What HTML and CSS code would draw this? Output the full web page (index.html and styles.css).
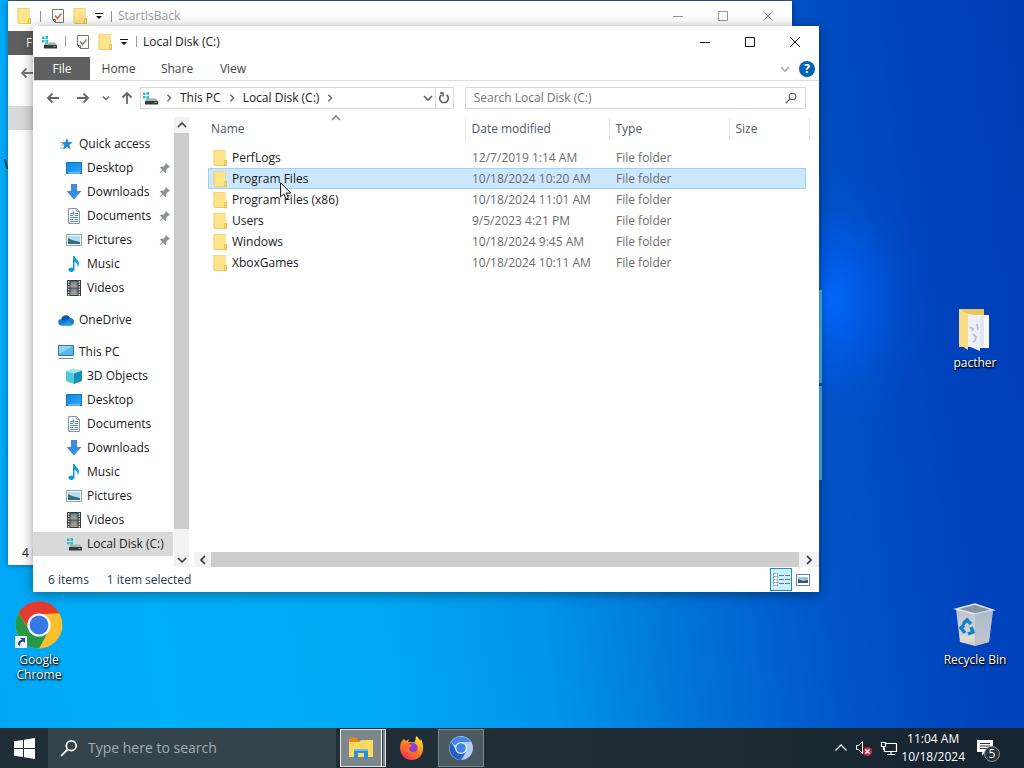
FILE: index.html
```html
<!DOCTYPE html>
<html lang="en">
<head>
<meta charset="utf-8">
<title>Local Disk (C:)</title>
<link rel="stylesheet" href="styles.css">
</head>
<body>
<svg class="defs" aria-hidden="true">
  <defs>
    <linearGradient id="blue" x1="0" y1="0" x2="1" y2="1"><stop offset="0" stop-color="#1583dc"/><stop offset="1" stop-color="#28a8fc"/></linearGradient>
    <linearGradient id="fire" x1="0.8" y1="0" x2="0.2" y2="1"><stop offset="0" stop-color="#ffe33c"/><stop offset="0.5" stop-color="#ff8420"/><stop offset="1" stop-color="#f5245c"/></linearGradient>
    <linearGradient id="bin" x1="0" y1="0" x2="0" y2="1"><stop offset="0" stop-color="#b4bfcb"/><stop offset="0.75" stop-color="#d3d7dd"/><stop offset="0.8" stop-color="#e6ddd0"/><stop offset="1" stop-color="#cfcac8"/></linearGradient>
  </defs>
  <symbol id="folder" viewBox="0 0 16 16"><path d="M1.500 0H13.500v10H15v6H3l-1.500-1z" fill="#efc95c"/><path d="M2.500 .5H13v14.500H2.500z" fill="#ffe48a"/><path d="M12.500 10.500h2v5h-2z" fill="#f7d975" stroke="#dfb74f" stroke-width=".6"/></symbol>
  <symbol id="drive" viewBox="0 0 16 16"><path d="M1 2.500h2.500V5H1zM4.500 2H7v3H4.500zM1 6h2.500v2.500H1zM4.500 6H7v3H4.500z" fill="#1fc0d3"/><path d="M4.500 8.500h9L16 11H3z" fill="#a8b0b4"/><path d="M3 11h13v3.500H3z" fill="#343b40"/><path d="M12.500 12h2v1h-2z" fill="#65d58a"/></symbol>
  <symbol id="check" viewBox="0 0 16 16"><path d="M2.500 1.500h11v13h-8l-3-3z" fill="#fff" stroke="#777"/><path d="M2.500 11.500h3v3" fill="none" stroke="#777"/><path d="M5 7.500l2.500 3 4-5" fill="none" stroke="currentColor" stroke-width="1.500"/></symbol>
  <symbol id="more" viewBox="0 0 8 8"><path d="M0 1h8v1H0zM1 4h6L4 7z" fill="#111"/></symbol>
  <symbol id="back" viewBox="0 0 14 14"><path d="M13 7H2M6.500 2.500L2 7l4.500 4.500" fill="none" stroke="currentColor" stroke-width="1.800"/></symbol>
  <symbol id="chev" viewBox="0 0 10 10"><path d="M1 3l4 4 4-4" fill="none" stroke="currentColor" stroke-width="1.700"/></symbol>
  <symbol id="min" viewBox="0 0 12 12"><path d="M1 6.500h10" stroke="currentColor"/></symbol>
  <symbol id="max" viewBox="0 0 12 12"><path d="M1.500 1.500h9v9h-9z" fill="none" stroke="currentColor"/></symbol>
  <symbol id="close" viewBox="0 0 12 12"><path d="M1 1l10 10M11 1L1 11" stroke="currentColor"/></symbol>
  <symbol id="lens" viewBox="0 0 16 16"><circle cx="10" cy="6" r="4.400" fill="none" stroke="currentColor" stroke-width="1.500"/><path d="M6.800 9.200L1 15" stroke="currentColor" stroke-width="1.600"/></symbol>
  <symbol id="star" viewBox="0 0 16 16"><path d="M9 2l1.500 4 4.300.2-3.400 2.700 1.200 4.500L9 11l-3.800 2.500 1.200-4.400-3.300-2.700 4.300-.3z" fill="#2488d8"/><path d="M2 6.500h3M3 9h3M2 12h4" stroke="#72b9ea"/></symbol>
  <symbol id="desktop" viewBox="0 0 16 16"><path d="M0 2h16v12H0z" fill="#1471b8"/><path d="M.8 2.800h14.400v10H.8z" fill="url(#blue)"/><path d="M2 13h12" stroke="#b9dcf7"/></symbol>
  <symbol id="down" viewBox="0 0 16 16"><path d="M5 0h6v7h4.500L8 15.500.5 7H5z" fill="#3b8edb"/></symbol>
  <symbol id="doc" viewBox="0 0 16 16"><path d="M2.500.5h8l3 3v12h-11z" fill="#fff" stroke="#8b98a1"/><path d="M10.500.5v3h3" fill="none" stroke="#8b98a1"/><path d="M4 5.500h3M4 7.500h3M8.500 5.500H12M8.500 7.500H12M4 9.500h8M4 11.500h3M8.500 11.500H12M4 13.500h8M7.500 3.500v3" stroke="#4a90c9"/></symbol>
  <symbol id="pic" viewBox="0 0 16 16"><path d="M.5 2.500h15v11H.5z" fill="#fff" stroke="#8fa1ad"/><path d="M2 4h12v8H2z" fill="#b8dcef"/><path d="M2 6l4 2 8 2v2H2z" fill="#386b82"/></symbol>
  <symbol id="music" viewBox="0 0 16 16"><path d="M7 0h1.500c.5 3 5 4 4.500 8-.2 1.500-.8 2.500-1.500 3 .6-3-1-4.500-3-5v7.500c0 1.400-1.300 2.500-3 2.500s-3-1-3-2.300C2.500 12 5 11 7 11.700z" fill="#1898dc"/></symbol>
  <symbol id="video" viewBox="0 0 16 16"><path d="M1 0h14v16H1z" fill="#363a40"/><path d="M4.500 1.500h7v6h-7zM4.500 8.500h7V15h-7z" fill="#6e8ba3"/><path d="M4.500 5l3-2 4 3v1.500h-7zM4.500 12l4-2 3 3v2h-7z" fill="#a39a80"/><path d="M2.700 1v15M13.300 1v15" stroke="#f5f5f5" stroke-width="1.400" stroke-dasharray="1.400 1.200"/></symbol>
  <symbol id="cloud" viewBox="0 0 16 16"><path d="M3.500 7A4.500 4.500 0 0 1 12 6c2.500 0 4 1.700 4 3.800S14.500 13.500 12.500 13.500h-9A3.200 3.200 0 0 1 3.500 7z" fill="#167bd0"/><path d="M3.500 7A4.500 4.500 0 0 1 12 6L6 9z" fill="#0a59a5"/><path d="M2 13l9-4 4.500 3a3.500 3.500 0 0 1-3 1.500h-9z" fill="#2498e8"/></symbol>
  <symbol id="pc" viewBox="0 0 16 16"><path d="M.5 1.500h15v10H.5z" fill="#55b8f3" stroke="#3b7499"/><path d="M1 2h14L1 10z" fill="#91d6fa"/><path d="M1 14.500h14" stroke="#78868f"/></symbol>
  <symbol id="cube" viewBox="0 0 16 16"><path d="M0 3l7-2.500 9 2-7 3z" fill="#9be6ef"/><path d="M0 3l8 2.500V16l-8-3z" fill="#4fc9dc"/><path d="M8 5.500l8-3V13l-8 3z" fill="#168fb9"/></symbol>
  <symbol id="pin" viewBox="0 0 12 12"><path d="M7 1l4 4-1 .8-.8-.3-2 2.200.1 2.500-1 1-2.500-2.600L1 11.200.5 11l2.600-3L1 5.500l1-1 2.500.2 2-2-.3-.8z" fill="#8d9499"/></symbol>
</svg>

<main class="desktop">
  <span class="hidden-label"></span>
  <span class="logo-edge"></span>

  <div class="shortcut chrome">
    <svg viewBox="0 0 48 48"><circle cx="24" cy="24" r="23.500" fill="#f9bf2d"/><path d="M3.600 12.200A23.500 23.500 0 0 1 44.400 12.200L24 13.300 14.500 29z" fill="#e33b2e"/><path d="M3.600 12.200A23.500 23.500 0 0 0 24.200 47.500L33.500 29.500 24 34.500 14.500 29.500z" fill="#279847"/><circle cx="24" cy="24" r="11.600" fill="#fff"/><circle cx="24" cy="24" r="9.400" fill="#3777e6"/><path d="M0 35h12v12H0z" fill="#f7f9ff"/><path d="M3 44c0-4 2-5 4-5l-2-2h5v5L8 40.500C6 41 5 42 5 45z" fill="#294b91"/></svg>
    <span>Google<br>Chrome</span>
  </div>
  <div class="shortcut pacther">
    <svg viewBox="0 0 48 48"><path d="M8 5h25v38H8z" fill="#e9c45c"/><path d="M25 11h13v33H25z" fill="#fbfaf4"/><path d="M29 12l4-1v33l-4-1z" fill="#e3e5ef"/><path d="M8 5l9 5v36l-9-6z" fill="#f9dc87"/><path d="M17 10l12 2v35l-12-5z" fill="#eef0f8"/><path d="M19 23l3 2-1 2M22 30l3 3-1 4-2 1M26 20l1 6" stroke="#b5bdd2" stroke-width="1.800" fill="none"/></svg>
    <span>pacther</span>
  </div>
  <div class="shortcut recycle">
    <svg viewBox="0 0 48 48"><path d="M5 8L24 3l18 6-4 32-14 4-15-4z" fill="url(#bin)"/><path d="M5 8l19-5 18 6-18 4z" fill="#8795a3" stroke="#dfe6ed" stroke-width="1.500"/><path d="M24 13l18-4-4 32-14 4z" fill="#a9b6c6" opacity=".6"/><path d="M12 23l4-4 4 4M20 26l2 5-5 2M14 32l-4-5 3-3" fill="none" stroke="#1683c7" stroke-width="3.500"/></svg>
    <span>Recycle Bin</span>
  </div>

  <section class="window rear" aria-label="StartIsBack">
    <header class="titlebar">
      <svg class="i16"><use href="#folder"/></svg><i class="sep"></i>
      <svg class="i16 orange"><use href="#check"/></svg><svg class="i16"><use href="#folder"/></svg><svg class="i8"><use href="#more"/></svg><i class="sep"></i>
      <span class="title">StartIsBack</span>
      <div class="caption"><button aria-label="Minimize"><svg><use href="#min"/></svg></button><button aria-label="Maximize"><svg><use href="#max"/></svg></button><button aria-label="Close"><svg><use href="#close"/></svg></button></div>
    </header>
    <div class="rear-tab">F</div>
    <div class="rear-nav"><svg class="i14"><use href="#back"/></svg></div>
    <div class="rear-head"></div>
    <div class="rear-body"></div>
    <footer class="rear-status">4 items</footer>
  </section>

  <section class="window front" aria-label="Local Disk (C:)">
    <header class="titlebar">
      <svg class="i16"><use href="#drive"/></svg><i class="sep"></i>
      <svg class="i16 tan"><use href="#check"/></svg><svg class="i16"><use href="#folder"/></svg><svg class="i8"><use href="#more"/></svg><i class="sep"></i>
      <span class="title">Local Disk (C:)</span>
      <div class="caption"><button aria-label="Minimize"><svg><use href="#min"/></svg></button><button aria-label="Maximize"><svg><use href="#max"/></svg></button><button aria-label="Close"><svg><use href="#close"/></svg></button></div>
    </header>
    <nav class="ribbon">
      <button class="file">File</button><button>Home</button><button>Share</button><button>View</button>
      <span class="help"><button aria-label="Expand ribbon"><svg class="i10"><use href="#chev"/></svg></button><button class="question" aria-label="Help">?</button></span>
    </nav>
    <div class="address">
      <button class="b-back" aria-label="Back"><svg class="i14"><use href="#back"/></svg></button>
      <button class="b-fwd" aria-label="Forward"><svg class="i14 flip"><use href="#back"/></svg></button>
      <button class="b-recent" aria-label="Recent"><svg class="i8"><use href="#chev"/></svg></button>
      <button class="b-up" aria-label="Up"><svg class="i14 up"><use href="#back"/></svg></button>
      <div class="path">
        <svg class="i16"><use href="#drive"/></svg><svg class="i8 right"><use href="#chev"/></svg>
        <button>This PC</button><svg class="i8 right"><use href="#chev"/></svg>
        <button>Local Disk (C:)</button><svg class="i8 right"><use href="#chev"/></svg>
        <button class="drop" aria-label="History"><svg class="i10"><use href="#chev"/></svg></button>
        <button class="refresh" aria-label="Refresh"><svg viewBox="0 0 12 12" class="i12"><path d="M8.500 2.800A4.300 4.300 0 1 1 3.500 2.800M2 1h3v3.500" fill="none" stroke="#555" stroke-width="1.500"/></svg></button>
      </div>
      <label class="search"><input type="text" aria-label="Search Local Disk (C:)" placeholder="Search Local Disk (C:)"><svg class="i12"><use href="#lens"/></svg></label>
    </div>
    <div class="content">
      <nav class="tree">
        <ul>
          <li class="root"><svg class="i16"><use href="#star"/></svg>Quick access</li>
          <li><svg class="i16"><use href="#desktop"/></svg>Desktop<svg class="pin"><use href="#pin"/></svg></li>
          <li><svg class="i16"><use href="#down"/></svg>Downloads<svg class="pin"><use href="#pin"/></svg></li>
          <li><svg class="i16"><use href="#doc"/></svg>Documents<svg class="pin"><use href="#pin"/></svg></li>
          <li><svg class="i16"><use href="#pic"/></svg>Pictures<svg class="pin"><use href="#pin"/></svg></li>
          <li><svg class="i16"><use href="#music"/></svg>Music</li>
          <li><svg class="i16"><use href="#video"/></svg>Videos</li>
        </ul>
        <ul><li class="root"><svg class="i16"><use href="#cloud"/></svg>OneDrive</li></ul>
        <ul>
          <li class="root"><svg class="i16"><use href="#pc"/></svg>This PC</li>
          <li><svg class="i16"><use href="#cube"/></svg>3D Objects</li>
          <li><svg class="i16"><use href="#desktop"/></svg>Desktop</li>
          <li><svg class="i16"><use href="#doc"/></svg>Documents</li>
          <li><svg class="i16"><use href="#down"/></svg>Downloads</li>
          <li><svg class="i16"><use href="#music"/></svg>Music</li>
          <li><svg class="i16"><use href="#pic"/></svg>Pictures</li>
          <li><svg class="i16"><use href="#video"/></svg>Videos</li>
          <li class="current"><svg class="i16"><use href="#drive"/></svg>Local Disk (C:)</li>
        </ul>
      </nav>
      <div class="vscroll"><button aria-label="Scroll up"><svg class="i10 turn"><use href="#chev"/></svg></button><div class="thumb"></div><button class="end" aria-label="Scroll down"><svg class="i10"><use href="#chev"/></svg></button></div>
      <div class="files">
        <table>
          <colgroup><col><col class="c-date"><col class="c-type"><col class="c-size"></colgroup>
          <thead><tr><th>Name<svg class="sort turn"><use href="#chev"/></svg></th><th>Date modified</th><th>Type</th><th>Size</th></tr></thead>
          <tbody>
            <tr><td><svg class="i16"><use href="#folder"/></svg>PerfLogs</td><td>12/7/2019 1:14 AM</td><td>File folder</td><td></td></tr>
            <tr class="selected"><td><svg class="i16"><use href="#folder"/></svg>Program Files</td><td>10/18/2024 10:20 AM</td><td>File folder</td><td></td></tr>
            <tr><td><svg class="i16"><use href="#folder"/></svg>Program Files (x86)</td><td>10/18/2024 11:01 AM</td><td>File folder</td><td></td></tr>
            <tr><td><svg class="i16"><use href="#folder"/></svg>Users</td><td>9/5/2023 4:21 PM</td><td>File folder</td><td></td></tr>
            <tr><td><svg class="i16"><use href="#folder"/></svg>Windows</td><td>10/18/2024 9:45 AM</td><td>File folder</td><td></td></tr>
            <tr><td><svg class="i16"><use href="#folder"/></svg>XboxGames</td><td>10/18/2024 10:11 AM</td><td>File folder</td><td></td></tr>
          </tbody>
        </table>
        <div class="hscroll"><button aria-label="Scroll left"><svg class="i10 left"><use href="#chev"/></svg></button><div class="thumb"></div><button aria-label="Scroll right"><svg class="i10 right"><use href="#chev"/></svg></button></div>
      </div>
    </div>
    <footer class="status"><span>6 items</span><span>1 item selected</span>
      <div class="views"><button class="on" aria-label="Details"><svg viewBox="0 0 20 20" class="i20"><path d="M2.500 3.500h4v12h-4zM2.500 6.500h4M2.500 9.500h4M2.500 12.500h4" fill="#fff" stroke="#7391a0" stroke-dasharray="2 1"/><path d="M8 5.500h5M14 5.500h5M8 9.500h5M14 9.500h5M8 13.500h5M14 13.500h5" stroke="#587f94"/></svg></button><button aria-label="Large icons"><svg viewBox="0 0 14 12" class="i14"><path d="M.5.500h13v11H.5z" fill="#fff" stroke="#6d80aa"/><path d="M2 3h10v6H2z" fill="#9fc4e4"/><path d="M2 5l5 2 5-1v3H2z" fill="#35556c"/></svg></button></div>
    </footer>
  </section>
  <svg class="cursor" viewBox="0 0 12 18"><path d="M.6.800v14l3.300-3 2.200 5.300 2.300-1-2.200-5h4.600z" fill="#fff" stroke="#111"/></svg>
</main>

<footer class="taskbar">
  <button class="start" aria-label="Start"><svg viewBox="0 0 20 20"><path d="M0 3l8.500-1.200v7.700H0zM9.500 1.700L20 0v9.500H9.500zM0 10.500h8.500v7.700L0 17zM9.500 10.500H20V20L9.500 18.400z" fill="#fff"/></svg></button>
  <label class="tasksearch"><svg class="i18"><use href="#lens"/></svg><input type="text" aria-label="Type here to search" placeholder="Type here to search"></label>
  <button class="app explorer" aria-label="File Explorer"><svg viewBox="0 0 24 24"><path d="M0 3c0-2 8-2 9 0v3H0z" fill="#e08b24"/><path d="M0 6h10l2-2h12v17H0z" fill="#ffd95e"/><path d="M5 13h14v10h-4v-6H9v6H5z" fill="#2d91d8"/><path d="M5 13h14v2H5z" fill="#67bbed"/></svg></button>
  <button class="app" aria-label="Firefox"><svg viewBox="0 0 24 24"><path d="M1 6l3-3 2 2 3-2-1 3 7 0 1-6c3 2 4 4 4 5l1-2c5 10 1 21-9 21C2 24-2 14 1 6z" fill="url(#fire)"/><circle cx="12" cy="12" r="5.500" fill="#8b3fd2"/><path d="M3 8c3-2 6 0 9 1-1 2-3 2-3 4 1 4 7 4 9 0-1 7-13 8-15-5z" fill="#ff6a2b"/></svg></button>
  <button class="app chromium" aria-label="Chromium"><svg viewBox="0 0 24 24"><circle cx="12" cy="12" r="12" fill="#b1cdf8"/><path d="M2 6a12 12 0 0 1 20 0H12v8z" fill="#4586e9"/><path d="M2 6a12 12 0 0 0 10 18l5-8-8 1z" fill="#2460c6"/><circle cx="12" cy="12" r="6" fill="#eef4ff"/><circle cx="12" cy="12" r="4.800" fill="#4285eb"/></svg></button>
  <div class="tray">
    <svg class="i14 turn" viewBox="0 0 14 14"><path d="M1.500 4.500L7 10l5.500-5.500" fill="none" stroke="#fff" stroke-width="1.300"/></svg>
    <svg class="i18" viewBox="0 0 18 18"><path d="M1.500 6.500h2l4-4v12l-4-4h-2z" fill="none" stroke="#fff"/><circle cx="12.500" cy="12.500" r="4.500" fill="#c92a46"/><path d="M10.500 10.500l4 4M14.500 10.500l-4 4" stroke="#fff" stroke-width="1.400"/></svg>
    <svg class="i18" viewBox="0 0 18 18"><path d="M5.500 4.500h11v8h-12v-4M11 12.500v3M7 15.500h8M1.500 3.500h4v4h-4zM3.500 7.500v3h1" fill="none" stroke="#fff" stroke-width="1.200"/></svg>
    <time>11:04 AM<br>10/18/2024</time>
    <button class="notify" aria-label="Notifications"><svg viewBox="0 0 18 18" class="i18"><path d="M1 1h16v12H9l-3 4v-4H1z" fill="#fff"/><path d="M4 4.500h10M4 7h10M4 9.500h7" stroke="#27333c"/></svg><span class="badge">5</span></button>
  </div>
</footer>
</body>
</html>
```
FILE: styles.css
```css
* { box-sizing: border-box; }
html, body { height: 100%; }
body { margin: 0; display: flex; flex-direction: column; overflow: hidden; font: 12px/16px "Open Sans", "Noto Sans", sans-serif; color: #1a1a1a; }
button, input { font: inherit; color: inherit; background: none; border: 0; padding: 0; margin: 0; }
button { display: flex; align-items: center; justify-content: center; }
svg { flex: none; display: block; }
.defs { position: absolute; width: 0; height: 0; }
.i8 { width: 8px; height: 8px; }
.i10 { width: 10px; height: 10px; }
.i12 { width: 12px; height: 12px; }
.i14 { width: 14px; height: 14px; }
.i16 { width: 16px; height: 16px; }
.i18 { width: 18px; height: 18px; }
.i20 { width: 20px; height: 20px; }
.flip, .turn { transform: rotate(180deg); }
.up, .left { transform: rotate(90deg); }
.right { transform: rotate(-90deg); }

.desktop {
  position: relative; flex: 1; min-height: 0; overflow: hidden;
  background:
    radial-gradient(ellipse 100px 130px at 830px 300px, rgba(0, 105, 255, 0.9), rgba(0, 100, 255, 0.45) 40%, rgba(0, 95, 240, 0.12) 75%, rgba(0, 90, 230, 0) 100%),
    linear-gradient(83deg, #00a6f6 0%, #00b0f8 15%, #00a9f3 34%, #0094ea 50%, #0070d6 64%, #0055c8 76%, #0044be 88%, #003cb4 100%);
}
.logo-edge { position: absolute; left: 800px; top: 290px; width: 22px; height: 190px; background: linear-gradient(#45b8e8 0 93px, #075a9a 93px 96px, #45b8e8 96px); }
.hidden-label { position: absolute; left: 5px; top: 159px; width: 6px; height: 10px; border-left: 2px solid #0b456f; transform: skewX(14deg); }

.shortcut { position: absolute; width: 76px; display: flex; flex-direction: column; align-items: center; gap: 3px; color: #fff; line-height: 15px; text-align: center; text-shadow: 1px 1px 2px #000, 0 1px 2px #000; }
.shortcut svg { width: 48px; height: 48px; }
.chrome { left: 1px; top: 601px; }
.pacther { right: 11px; top: 304px; }
.recycle { right: 11px; top: 601px; }

.window { position: absolute; display: flex; flex-direction: column; background: #fff; }
.front { left: 33px; right: 205px; top: 26px; bottom: 136px; box-shadow: 0 2px 12px rgba(0, 0, 0, 0.4); }
.rear { left: 8px; right: 232px; top: 1px; bottom: 163px; box-shadow: 0 0 6px rgba(0, 0, 0, 0.4), 0 -1px 0 #345b88; }
.titlebar { flex: none; display: flex; align-items: center; height: 31px; padding-left: 8px; gap: 8px; }
.rear .titlebar { height: 30px; }
.sep { width: 1px; height: 11px; background: #999; margin: 0 1px 0 0; }
.titlebar .i16 + .i16 { margin-left: -2px; }
.titlebar .i8 { margin-left: -1px; }
.titlebar .sep + .title { margin-left: -3px; }
.orange { color: #df6736; }
.tan { color: #8c7c70; }
.rear .title { color: #999; }
.title { flex: 1; }
.caption { display: flex; padding-right: 2px; }
.caption button { width: 45px; height: 30px; color: #111; }
.rear .caption button { color: #999; }
.caption svg { width: 12px; height: 12px; }
.rear-tab { height: 24px; padding: 4px 18px; color: #fff; background: #5e5e5e; }
.rear-nav { height: 51px; padding: 11px 12px; color: #777; }
.rear-head { height: 24px; background: #d9d9d9; }
.rear-body { flex: 1; }
.rear-status { padding: 4px 14px; }

.ribbon { flex: none; display: flex; height: 24px; padding-left: 1px; border-bottom: 1px solid #dedede; color: #444; }
.ribbon button { width: 57px; }
.ribbon .file { background: #606060; color: #fff; width: 56px; }
.ribbon button:nth-child(3) { width: 60px; }
.ribbon button:nth-child(4) { width: 52px; }
.ribbon .help { margin-left: auto; display: flex; align-items: center; gap: 6px; padding-right: 4px; color: #aaa; }
.ribbon .help button { width: 16px; height: 16px; }
.ribbon .help .question { border-radius: 50%; background: #0063b8; color: #fff; font-weight: 700; }

.address { flex: none; display: flex; align-items: center; height: 34px; padding: 0 13px; color: #666; }
.b-back { width: 14px; }
.b-fwd { width: 14px; margin-left: 16px; }
.b-recent { width: 8px; margin-left: 12px; }
.b-up { width: 14px; margin-left: 10px; }
.path { flex: 49; display: flex; align-items: center; height: 22px; margin-left: 6px; gap: 7px; border: 1px solid #d9d9d9; padding-left: 1px; color: #666; }
.path button { color: #1a1a1a; white-space: nowrap; }
.path .drop { margin-left: auto; color: #666; }
.path .refresh { width: 18px; height: 20px; border-left: 1px solid #d9d9d9; margin-left: -5px; }
.search { flex: 51; display: flex; align-items: center; height: 22px; margin-left: 11px; border: 1px solid #d9d9d9; padding: 0 8px; color: #555; }
input { flex: 1; min-width: 0; outline: 0; }
input::placeholder { color: #737373; opacity: 1; }

.content { flex: 1; min-height: 0; display: flex; padding-top: 2px; }
.tree { width: 141px; flex: none; padding: 15px 1px 0 0; overflow: hidden; }
.tree ul { list-style: none; margin: 0 0 8px; padding: 0; }
.tree li { display: flex; align-items: center; height: 24px; padding-left: 33px; gap: 5px; white-space: nowrap; }
.tree .root { padding-left: 25px; }
.tree .current { background: #d9d9d9; }
.pin { width: 12px; height: 12px; margin-left: auto; margin-right: 2px; }
.vscroll { width: 15px; flex: none; display: flex; flex-direction: column; background: #f2f2f2; color: #444; }
.vscroll button { height: 16px; }
.thumb { flex: 1; background: #cdcdcd; }
.vscroll .end { height: 38px; align-items: flex-end; padding-bottom: 2px; }
.files { flex: 1; min-width: 0; display: flex; flex-direction: column; padding-left: 5px; }
table { border-collapse: collapse; table-layout: fixed; width: calc(100% - 27px); margin: 1px 0 0 14px; }
.c-date { width: 144px; }
.c-type { width: 120px; }
.c-size { width: 77px; }
th { position: relative; height: 22px; padding: 0 6px; text-align: left; font-weight: 400; color: #4c5b69; border-left: 1px solid #e5e5e5; }
th:first-child { border-left: 0; padding-left: 3px; }
.sort { position: absolute; left: 48%; top: -5px; width: 10px; height: 10px; color: #888; }
th:last-child::after { content: ""; position: absolute; right: -4px; top: 0; bottom: 0; border-right: 1px solid #e5e5e5; }
td { height: 21px; padding: 0 7px; color: #6d6d6d; white-space: nowrap; }
td:first-child { padding-left: 4px; color: #1a1a1a; }
td svg { display: inline-block; vertical-align: top; margin-right: 4px; }
tbody::before { content: ""; display: block; height: 7px; }
.selected { background: #cce8ff; outline: 1px solid #99d1ff; outline-offset: -1px; }
.hscroll { display: flex; height: 15px; margin-top: auto; color: #333; background: #f2f2f2; }
.hscroll button { width: 17px; }
.hscroll button:last-child { width: 20px; }
.status { flex: none; display: flex; align-items: center; height: 25px; padding: 0 5px 0 15px; gap: 18px; color: #1e395b; }
.views { display: flex; margin-left: auto; }
.views button { width: 22px; height: 23px; }
.views .on { border: 1px solid #268dad; background: #cceffc; }
.cursor { position: absolute; left: 280px; top: 182px; width: 12px; height: 18px; }

.taskbar { flex: none; display: flex; height: 40px; color: #fff; background: linear-gradient(90deg, #1f2e35, #202d35 55%, #162430); }
.start { width: 48px; }
.start svg { width: 21px; height: 21px; }
.tasksearch { display: flex; align-items: center; width: 288px; gap: 10px; padding-left: 12px; background: #35444b; font-size: 14px; line-height: 20px; margin-right: 4px; }
.tasksearch input::placeholder { color: #a4adb1; }
.app { width: 46px; margin: 1px 3px 1px 0; }
.app svg { width: 24px; height: 24px; }
.explorer { padding-right: 5px; background: linear-gradient(90deg, #7d878b 40px, #fff 40px 41px, #26333a 41px 42px, #7d878b 42px); border: 1px solid #e4e7e8; }
.chromium { background: #4b5960; border: 1px solid #7b878d; }
.tray { margin-left: auto; display: flex; align-items: center; gap: 7px; padding-right: 30px; }
time { text-align: center; line-height: 18px; margin-left: -4px; }
.notify { position: relative; margin-left: 4px; }
.badge { position: absolute; left: 8px; top: 7px; width: 16px; height: 16px; border: 1px solid #89949b; border-radius: 50%; background: #29343d; line-height: 14px; }
```
